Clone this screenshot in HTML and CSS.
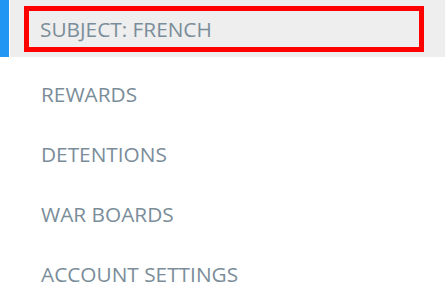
FILE: index.html
```html
<!DOCTYPE html>
<html lang="en">
<head>
    <meta charset="UTF-8">
    <meta name="viewport" content="width=device-width, initial-scale=1.0">
    <title>Menu</title>
    <link rel="stylesheet" href="styles.css">
</head>
<body>
    <ul class="menu">
        <li class="item active"><a href="#"><span class="label">SUBJECT: FRENCH</span></a></li>
        <li class="item"><a href="#"><span class="label">REWARDS</span></a></li>
        <li class="item"><a href="#"><span class="label">DETENTIONS</span></a></li>
        <li class="item"><a href="#"><span class="label">WAR BOARDS</span></a></li>
        <li class="item"><a href="#"><span class="label">ACCOUNT SETTINGS</span></a></li>
    </ul>
</body>
</html>
```

FILE: styles.css
```css
*{
    margin: 0;
    padding: 0;
    box-sizing: border-box;
}
body{
    background-color: white;
    font-family: "Open Sans", sans-serif;
}
.menu{
    list-style: none;
}
.item a{
    display: block;
    height: 60px;
    line-height: 60px;
    padding-left: 41px;
    color: #7b8d99;
    text-decoration: none;
    font-size: 20.8px;
}
.item.active{
    border-left: 9px solid #2196f3;
    margin-bottom: 7px;
}
.item.active a{
    height: 57px;
    line-height: 36px;
    margin-left: 1px;
    background-color: #eeeeee;
    padding: 6px 21px 5px 14px;
}
.item.active .label{
    display: block;
    border: 5px solid red;
    padding-left: 11px;
    line-height: 36px;
}
```
